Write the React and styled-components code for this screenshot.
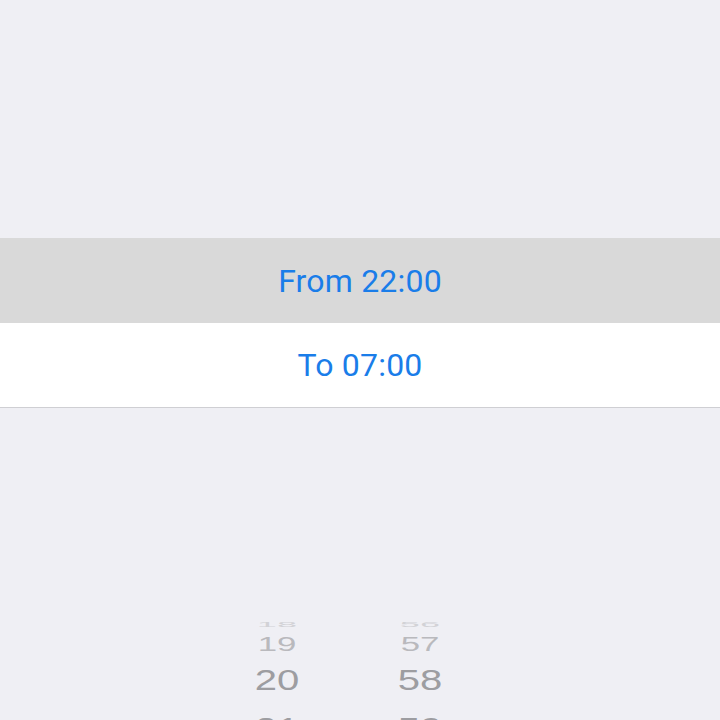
import React from 'react';
import styled, { createGlobalStyle } from 'styled-components';

const GlobalStyle = createGlobalStyle`
  html, body {
    margin: 0;
    padding: 0;
    background: #efeff4;
    overflow: hidden;
  }
`;

const Page = styled.div`
  width: 720px;
  height: 720px;
  display: flex;
  flex-direction: column;
  background: #efeff4;
  overflow: hidden;
`;

const TopSpace = styled.div`
  height: 238px;
  flex-shrink: 0;
`;

const Group = styled.div`
  display: flex;
  flex-direction: column;
  border-bottom: 1px solid #cfcfd3;
  flex-shrink: 0;
`;

const Row = styled.div`
  height: ${p => p.h}px;
  background: ${p => (p.selected ? '#d9d9d9' : '#ffffff')};
  display: flex;
  align-items: center;
  justify-content: center;
  font-family: Roboto, "Liberation Sans", sans-serif;
  font-size: 32px;
  color: #1a7de9;
  letter-spacing: 0.2px;
`;

const Gap = styled.div`
  height: 210px;
  flex-shrink: 0;
`;

const Wheel = styled.div`
  display: flex;
  justify-content: center;
  gap: 43px;
  padding-right: 23px;
`;

const Column = styled.div`
  width: 100px;
  display: flex;
  flex-direction: column;
`;

const Item = styled.div`
  height: ${p => p.h}px;
  display: flex;
  align-items: center;
  justify-content: center;
  font-family: "Liberation Sans", Arial, sans-serif;
  font-size: 29px;
  line-height: 1;
  color: ${p => p.color};
  transform: scale(${p => p.sx}, ${p => p.sy});
`;

const wheelRows = [
  { h: 14, sx: 1.25, sy: 0.22, color: '#d2d2d6' },
  { h: 24, sx: 1.2, sy: 0.68, color: '#b9b9bd' },
  { h: 48, sx: 1.38, sy: 1, color: '#9d9da1' },
  { h: 48, sx: 1.38, sy: 1, color: '#9d9da1' },
];

const hours = ['18', '19', '20', '21'];
const minutes = ['56', '57', '58', '59'];

export default function App() {
  return (
    <Page>
      <GlobalStyle />
      <TopSpace />
      <Group>
        <Row selected h={85}>From 22:00</Row>
        <Row h={84}>To 07:00</Row>
      </Group>
      <Gap />
      <Wheel>
        {[hours, minutes].map((col, ci) => (
          <Column key={ci}>
            {col.map((v, i) => (
              <Item key={v} {...wheelRows[i]}>{v}</Item>
            ))}
          </Column>
        ))}
      </Wheel>
    </Page>
  );
}
